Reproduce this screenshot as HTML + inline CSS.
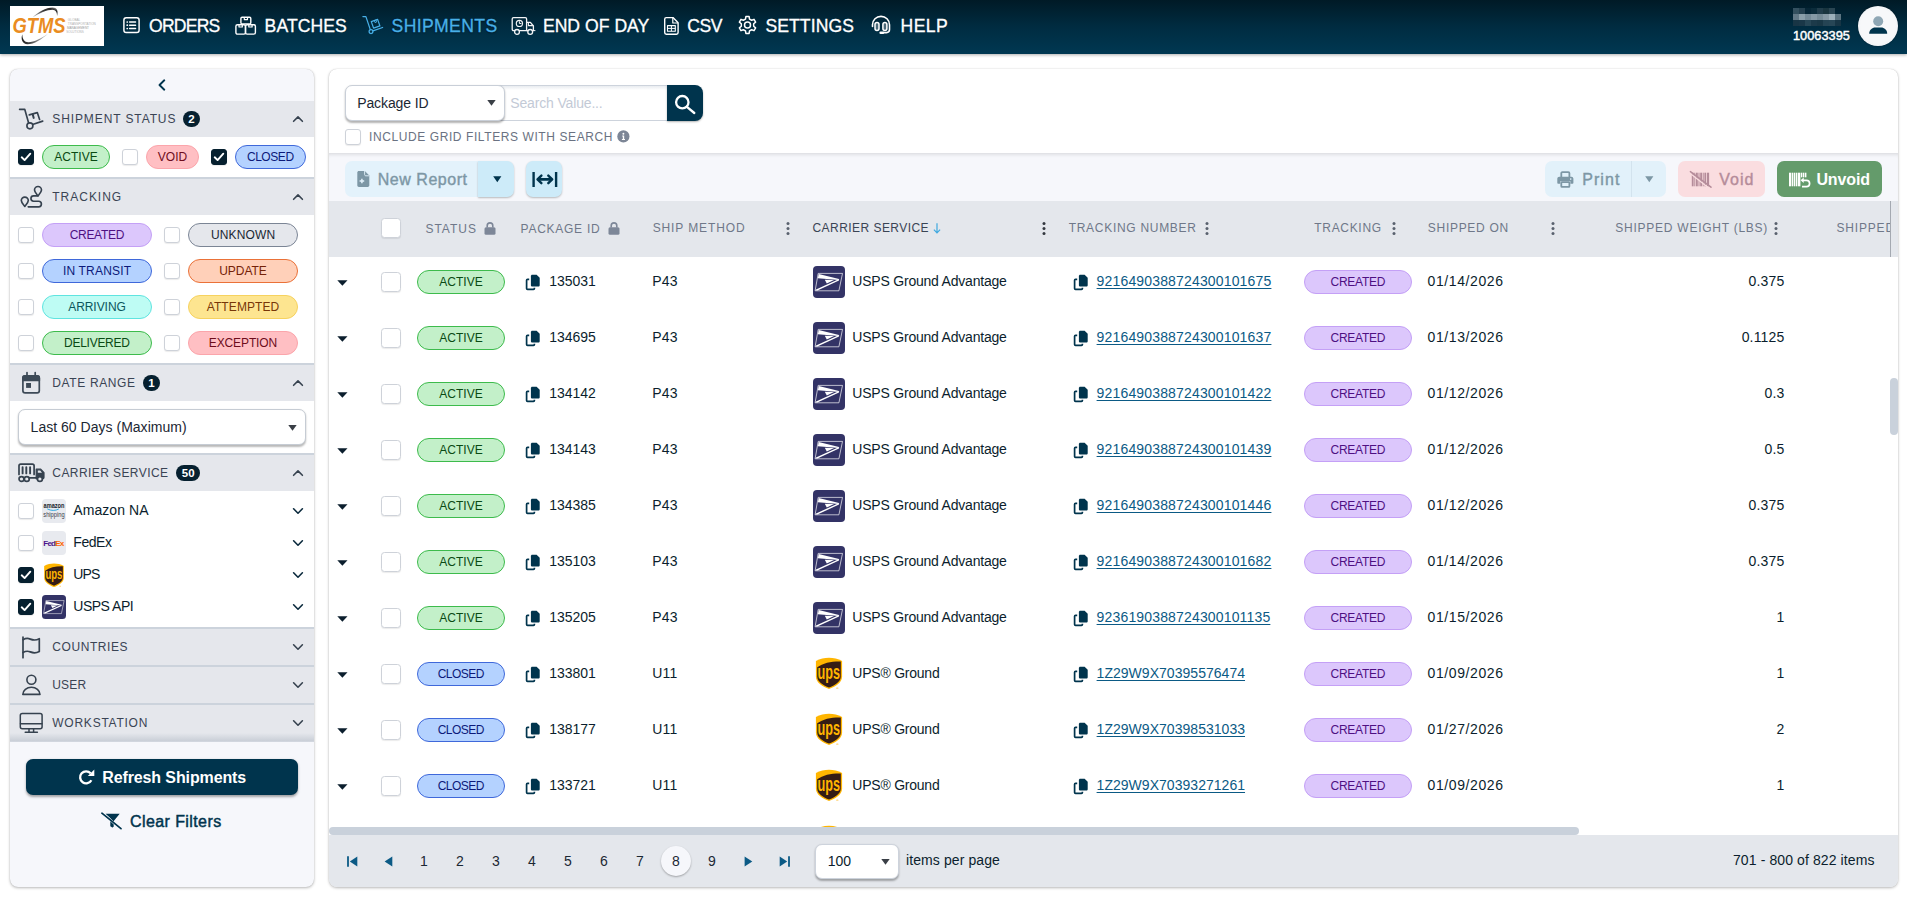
<!DOCTYPE html>
<html lang="en">
<head>
<meta charset="utf-8">
<title>GTMS Shipments</title>
<style>
*{box-sizing:border-box;margin:0;padding:0}
html,body{width:1907px;height:900px;overflow:hidden;background:#fff}
body{font-family:"Liberation Sans",sans-serif;font-size:14px;color:#0b1e2d;position:relative}
.abs{position:absolute}
svg{display:block;overflow:visible}
/* ---------- header ---------- */
#hdr{position:absolute;left:0;top:0;width:1907px;height:54px;background:linear-gradient(180deg,#001a26 0%,#002c41 50%,#003852 100%);box-shadow:0 1px 3px rgba(0,0,0,.32)}
#logo{position:absolute;left:10px;top:6px;width:94px;height:40px;background:#fff;overflow:hidden}
.nav{position:absolute;top:0;height:54px;color:#fff;font-size:17.6px;line-height:54px;white-space:nowrap}
.nav span{top:-1px;-webkit-text-stroke:.3px currentColor}
.nav.on{color:#48b0e8}
.nav svg{position:absolute}
/* ---------- sidebar ---------- */
#side{position:absolute;left:10px;top:69px;width:304px;height:818px;background:#f6f7fb;border-radius:8px;box-shadow:0 1px 3px rgba(0,0,0,.27),0 0 1px rgba(0,0,0,.2);overflow:hidden}
.sh{position:absolute;left:0;width:304px;height:36px;background:#e5e7ec}
.sh .t{position:absolute;left:42px;top:0;line-height:36px;font-size:12px;letter-spacing:1.2px;color:#3a4454;white-space:nowrap}
.sb{position:absolute;left:0;width:304px;background:#fff}
.sep{position:absolute;left:0;width:304px;height:2px;background:#ccd3dc}
.cb{position:absolute;width:16px;height:16px;border:1px solid #ced2d9;border-radius:3px;background:#fff;box-shadow:0 1px 1px rgba(0,0,0,.08)}
.cb.on{background:#06202f;border-color:#06202f}
.chip{position:absolute;height:24px;border-radius:12px;border:1px solid;font-size:12px;line-height:22px;text-align:center;letter-spacing:.35px;white-space:nowrap}
.c-active{background:#c3f0c9;border-color:#3dbb4c;color:#0a4a14}
.c-void{background:#ffbfc3;border-color:#fba5ab;color:#6e0d1c}
.c-closed{background:#b4d2ff;border-color:#3f68da;color:#0c1a7a}
.c-created{background:#dcc7fc;border-color:#c4a0f6;color:#4e1082}
.c-unknown{background:#e5e7ec;border-color:#7b8595;color:#1b2733}
.c-update{background:#ffd0b9;border-color:#ea7138;color:#742208}
.c-arriving{background:#befcf4;border-color:#5fe4e0;color:#0b565c}
.c-attempted{background:#fde590;border-color:#f6d25f;color:#783708}
.badge{position:absolute;height:16px;min-width:16px;border-radius:8px;background:#06202f;color:#fff;font-size:11.5px;font-weight:bold;line-height:16px;text-align:center}
/* ---------- main ---------- */
#main{position:absolute;left:329px;top:69px;width:1569px;height:818px;background:#fff;border-radius:8px;box-shadow:0 1px 3px rgba(0,0,0,.27),0 0 1px rgba(0,0,0,.2);overflow:hidden}
.tx{font-size:14px;line-height:21px;color:#0b1e2d;white-space:nowrap}
.lk{color:#0b5a85;text-decoration:underline;text-underline-offset:2px}
</style>
</head>
<body>
<svg width="0" height="0" style="position:absolute">
  <defs>
    <symbol id="upsLogo" viewBox="0 0 32 32">
      <path d="M2.900 4C7 1.900 11.500 .8 16 .8S25 1.900 29.100 4V19.500C29.100 26 22 29.500 16 32 10 29.500 2.900 26 2.900 19.500Z" fill="#ffb500"/>
      <path d="M4.200 10.300C10 5.800 18.500 4.200 27.800 4.400V19.400C27.800 25 21.500 28.200 16 30.400 10.500 28.200 4.200 25 4.200 19.400Z" fill="#351c15"/>
      <text x="4.600" y="21.700" font-family="Liberation Sans,sans-serif" font-weight="bold" font-size="20.500" fill="#ffb500" textLength="22.600" lengthAdjust="spacingAndGlyphs">ups</text>
      <circle cx="24.300" cy="31.300" r="1.150" fill="#ffdf9a"/>
    </symbol>
    <symbol id="uspsLogo" viewBox="0 0 32 32">
      <path d="M5.200 7.400H29.500L25.900 24.800H2.100Z" fill="none" stroke="#fff" stroke-width=".75" stroke-opacity=".9"/>
      <path d="M5.700 7.900L26 13 25.600 13.900 4.900 12.200Z" fill="#fff"/>
      <path d="M11.800 13.700L21 14 13.800 17.400Z" fill="#fff"/>
      <path d="M26.100 13.100L26 14.600 4.400 24.500 2.500 24.400 3 23.400Z" fill="#fff"/>
    </symbol>
    <symbol id="copyIc" viewBox="0 0 15 17">
      <path d="M7.200 .7H11.600L14.700 3.800V11.200C14.700 11.900 14.100 12.500 13.400 12.500H7.200C6.500 12.500 5.900 11.900 5.900 11.200V2C5.900 1.300 6.500 .7 7.200 .7Z" fill="#00344d"/>
      <path d="M4.200 5.300H2.500C2 5.300 1.600 5.700 1.600 6.200V14.400C1.600 14.900 2 15.300 2.500 15.300H8.500C9 15.300 9.400 14.900 9.400 14.400V13.800" fill="none" stroke="#00344d" stroke-width="1.700"/>
    </symbol>
  </defs>
</svg>
<div id="hdr">
  <div id="logo">
    <svg width="94" height="40" viewBox="0 0 94 40">
      <defs>
        <linearGradient id="sw1" x1="0" y1="1" x2="1" y2="0"><stop offset="0" stop-color="#c8c8c8"/><stop offset=".55" stop-color="#3a3a3a"/><stop offset=".8" stop-color="#2a2a2a"/><stop offset="1" stop-color="#b5b5b5"/></linearGradient>
        <linearGradient id="sw2" x1="0" y1="0" x2="1" y2="0"><stop offset="0" stop-color="#1e1e1e"/><stop offset=".35" stop-color="#4a4a4a"/><stop offset="1" stop-color="#d5d5d5"/></linearGradient>
      </defs>
      <path d="M22.500 11.500C28 6 36 1.500 42.600 1.400C46.800 1.400 48.700 4.600 47 10.200C47.300 6.200 45.500 3.900 42.500 3.800C37 3.800 29 7.200 22.500 11.500Z" fill="url(#sw1)"/>
      <path d="M12.400 28.300C10.400 33 12.500 38.300 17.500 38.300C24 38.100 32 33.200 38.200 27.400C32 32 24 36 18.500 36.300C14.500 36.400 12.200 33 12.400 28.300Z" fill="url(#sw2)"/>
      <text x="2.600" y="26.800" font-family="Liberation Sans,sans-serif" font-style="italic" font-weight="bold" font-size="22" fill="#ea8c22" textLength="53" lengthAdjust="spacingAndGlyphs">GTMS</text>
      <g font-family="Liberation Sans,sans-serif" font-size="2.900" fill="#b0b0b0">
        <text x="57.800" y="14.800" textLength="12.500" lengthAdjust="spacingAndGlyphs">GLOBAL</text>
        <text x="57.800" y="18.900" textLength="28" lengthAdjust="spacingAndGlyphs">TRANSPORTATION</text>
        <text x="57" y="23.100" textLength="22" lengthAdjust="spacingAndGlyphs" fill="#9a9a9a">MANAGEMENT</text>
        <text x="56.300" y="27.300" textLength="17.500" lengthAdjust="spacingAndGlyphs">SOLUTIONS</text>
      </g>
    </svg>
  </div>

  <!-- ORDERS -->
  <div class="nav" style="left:123px;width:100px">
    <svg style="left:0;top:16px" width="18" height="18" viewBox="0 0 18 18" fill="none" stroke="#fff" stroke-width="1.45" stroke-linecap="round">
      <rect x=".9" y="1.7" width="15.2" height="14.8" rx="2.3"/>
      <path d="M6.6 6H12.6M6.6 9.2H12.6M6.6 12.5H12.6" stroke-width="1.35"/>
      <path d="M4.2 6h.1M4.2 9.2h.1M4.2 12.5h.1" stroke-width="1.7"/>
    </svg>
    <span class="abs" style="left:26px;letter-spacing:-.8px">ORDERS</span>
  </div>

  <!-- BATCHES -->
  <div class="nav" style="left:235px;width:115px">
    <svg style="left:0;top:15.6px" width="22" height="20" viewBox="0 0 22 20" fill="none" stroke="#fff" stroke-width="1.4" stroke-linejoin="round">
      <rect x="5.9" y="1.3" width="9.9" height="6.6" rx="1.2"/>
      <path d="M9.3 1.5v2.1h3.2V1.5" stroke-width="1.2"/>
      <rect x=".9" y="8.7" width="9.6" height="9.4" rx="1.6"/>
      <path d="M4 8.9v2.1h3.3V8.9" stroke-width="1.2"/>
      <rect x="10.5" y="8.7" width="9.9" height="9.4" rx="1.6"/>
      <path d="M13.8 8.9v2.1h3.3V8.9" stroke-width="1.2"/>
    </svg>
    <span class="abs" style="left:29.6px;letter-spacing:.07px">BATCHES</span>
  </div>

  <!-- SHIPMENTS -->
  <div class="nav on" style="left:362px;width:140px;text-shadow:0 1px 2px rgba(0,0,0,.55)">
    <svg style="left:0;top:15px" width="22" height="20" viewBox="0 0 22 20" fill="none" stroke="#48b0e8" stroke-width="1.25" stroke-linecap="round" stroke-linejoin="round">
      <path d="M.9 1.6H3.9L8.3 14.6"/>
      <circle cx="9" cy="16.6" r="1.9"/>
      <path d="M11 15.9L20.6 12.5"/>
      <path d="M9.3 6.6L15.6 4.4 17.9 10.9 11.6 13.1Z"/>
      <path d="M12.3 5.6l.7 2 1.6-.55-.7-2" stroke-width=".9"/>
    </svg>
    <span class="abs" style="left:29.6px;letter-spacing:.36px">SHIPMENTS</span>
  </div>

  <!-- END OF DAY -->
  <div class="nav" style="left:511px;width:145px">
    <svg style="left:0;top:15.6px" width="25" height="20" viewBox="0 0 25 20" fill="none" stroke="#f2f4f6" stroke-width="1.3" stroke-linejoin="round" stroke-linecap="round">
      <path d="M3.6 14.6H2.5C1.8 14.6 1.2 14 1.2 13.3V2.9C1.2 2.2 1.8 1.6 2.5 1.6H14.3C15 1.6 15.6 2.2 15.6 2.9V14.6H8.4"/>
      <path d="M15.6 6.4H19.4L22.4 10V14.6H21.4M15.6 14.6H17"/>
      <path d="M17.4 6.6V9.6H22" stroke-width="1.1"/>
      <circle cx="6" cy="15.9" r="2.4"/>
      <circle cx="19.2" cy="15.9" r="2.4"/>
      <circle cx="8.4" cy="7.4" r="3.1" stroke-width="1.15"/>
      <path d="M8.4 5.6V7.5H10" stroke-width="1"/>
      <path d="M22.4 14.6H24" stroke-width="1"/>
    </svg>
    <span class="abs" style="left:31.9px;letter-spacing:.02px">END OF DAY</span>
  </div>

  <!-- CSV -->
  <div class="nav" style="left:663px;width:70px">
    <svg style="left:0;top:15.6px" width="17" height="20" viewBox="0 0 17 20" fill="none" stroke="#fff" stroke-width="1.4" stroke-linejoin="round">
      <path d="M3.3 1.6H10L15.1 6.8V16.6C15.1 17.5 14.4 18.2 13.5 18.2H3.3C2.4 18.2 1.7 17.5 1.7 16.6V3.2C1.7 2.3 2.4 1.6 3.3 1.6Z"/>
      <path d="M9.8 1.8V7H15" stroke-width="1.2"/>
      <rect x="4.5" y="9.6" width="7.8" height="5.6" stroke-width="1.1"/>
      <path d="M4.5 12.4H12.3M8.4 9.6V15.2" stroke-width="1"/>
    </svg>
    <span class="abs" style="left:24.200px;letter-spacing:-.4px">CSV</span>
  </div>

  <!-- SETTINGS -->
  <div class="nav" style="left:738px;width:125px">
    <svg style="left:.2px;top:15.200px" width="19" height="20" viewBox="0 0 19 20" fill="none" stroke="#fff" stroke-width="1.500" stroke-linejoin="round">
      <path d="M7.49 4.03 L7.89 1.55 L11.11 1.55 L11.51 4.03 L13.67 5.27 L16.01 4.38 L17.62 7.17 L15.68 8.75 L15.68 11.25 L17.62 12.83 L16.01 15.62 L13.67 14.73 L11.51 15.97 L11.11 18.45 L7.89 18.45 L7.49 15.97 L5.33 14.73 L2.99 15.62 L1.38 12.83 L3.32 11.25 L3.32 8.75 L1.38 7.17 L2.99 4.38 L5.33 5.27Z"/>
      <circle cx="9.500" cy="10" r="3"/>
    </svg>
    <span class="abs" style="left:27.400px;letter-spacing:.08px">SETTINGS</span>
  </div>

  <!-- HELP -->
  <div class="nav" style="left:871px;width:90px">
    <svg style="left:0;top:15.400px" width="21" height="20" viewBox="0 0 21 20" fill="none" stroke="#fff" stroke-width="1.600" stroke-linecap="round" stroke-linejoin="round">
      <path d="M1.500 11.400V9.800C1.500 5 5.300 1.400 10 1.400S18.500 5 18.500 9.800V14.600C18.500 16.400 17.300 17.600 15.500 17.600H12.400"/>
      <rect x="4" y="7.400" width="4" height="8.200" rx="2" stroke-width="1.500" fill="rgba(255,255,255,.3)"/>
      <rect x="11.900" y="7.400" width="4" height="8.200" rx="2" stroke-width="1.500" fill="rgba(255,255,255,.3)"/>
      <path d="M9.600 17.700H12" stroke-width="2.400"/>
    </svg>
    <span class="abs" style="left:29.600px;letter-spacing:.4px">HELP</span>
  </div>

  <!-- user -->
  <svg class="abs" style="left:1793px;top:8px" width="48" height="18" viewBox="0 0 48 18" shape-rendering="crispEdges">
    <g>
      <rect x="0" y="0" width="6" height="6" fill="#33505f"/><rect x="6" y="0" width="6" height="6" fill="#24404f"/><rect x="12" y="0" width="6" height="6" fill="#062636"/><rect x="18" y="0" width="6" height="6" fill="#0b2c3b"/><rect x="24" y="0" width="6" height="6" fill="#213d4b"/><rect x="30" y="0" width="6" height="6" fill="#19353f"/><rect x="36" y="0" width="6" height="6" fill="#294552"/>
      <rect x="0" y="6" width="6" height="6" fill="#627987"/><rect x="6" y="6" width="6" height="6" fill="#8a9ea9"/><rect x="12" y="6" width="6" height="6" fill="#748a97"/><rect x="18" y="6" width="6" height="6" fill="#8599a5"/><rect x="24" y="6" width="6" height="6" fill="#758b97"/><rect x="30" y="6" width="6" height="6" fill="#8699a5"/><rect x="36" y="6" width="6" height="6" fill="#9db0ba"/><rect x="42" y="6" width="6" height="6" fill="#5c7481"/>
      <rect x="0" y="12" width="6" height="6" fill="#183545"/><rect x="6" y="12" width="6" height="6" fill="#1a3748"/><rect x="12" y="12" width="6" height="6" fill="#274656"/><rect x="18" y="12" width="6" height="6" fill="#1c3a4a"/><rect x="24" y="12" width="6" height="6" fill="#193746"/><rect x="30" y="12" width="6" height="6" fill="#254454"/><rect x="36" y="12" width="6" height="6" fill="#274656"/><rect x="42" y="12" width="6" height="6" fill="#173545"/>
    </g>
  </svg>
  <div class="abs" style="left:1793px;top:28px;font-size:12.800px;color:#fff;line-height:15px;letter-spacing:0;-webkit-text-stroke:.45px #fff">10063395</div>
  <div class="abs" style="left:1858px;top:6px;width:40px;height:40px;border-radius:50%;background:radial-gradient(circle at 50% 50%,#f7f8fa 60%,#e9ebef 100%);box-shadow:0 0 2px rgba(0,0,0,.4)">
    <svg width="40" height="40" viewBox="0 0 40 40">
      <circle cx="20.200" cy="15.200" r="5" fill="#8fa7b5"/>
      <path d="M11.200 27.700C11.200 24 14.300 21.600 17.200 21.600H23.200C26.100 21.600 29.200 24 29.200 27.700Z" fill="#00344d"/>
    </svg>
  </div>
</div>
<div id="side">
<svg class="abs" style="left:147px;top:9px" width="10" height="14" viewBox="0 0 10 14" fill="none" stroke="#00344d" stroke-width="1.9" stroke-linecap="round" stroke-linejoin="round"><path d="M7.300 2.300L2.500 7L7.300 11.700"/></svg>
<div class="sh" style="top:32px"><div class="t" style="left:42.3px;letter-spacing:0.89px">SHIPMENT STATUS</div></div>
<svg class="abs" style="left:8px;top:38px" width="27" height="24" viewBox="0 0 27 24" fill="none" stroke="#36424f" stroke-width="1.65" stroke-linecap="round" stroke-linejoin="round"><path d="M1.600 2.400H6.800L10.500 15.400"/><circle cx="11.900" cy="18.800" r="3"/><path d="M15.300 17.300L24.700 14.100"/><path d="M11.300 7.900L19.300 5.600L21.600 12.500"/><path d="M14.800 7.400L15.700 10.900" stroke-width="2"/></svg>
<div class="badge" style="left:173px;top:42px;width:17px">2</div>
<svg class="abs" style="left:282px;top:46px" width="12" height="8" viewBox="0 0 12 8" fill="none" stroke="#36424f" stroke-width="1.6" stroke-linecap="round" stroke-linejoin="round"><path d="M1.6 6.300L6 1.900L10.400 6.300"/></svg>
<div class="sh" style="top:110px"><div class="t" style="left:42.3px;letter-spacing:0.98px">TRACKING</div></div>
<svg class="abs" style="left:8px;top:116px" width="27" height="24" viewBox="0 0 27 24" fill="none" stroke="#36424f" stroke-width="1.65" stroke-linecap="round" stroke-linejoin="round"><path d="M6.800 21.400C5.300 19.600 3.300 17.700 3.300 15.600A3.500 3.500 0 0 1 10.300 15.600C10.300 17.700 8.300 19.600 6.800 21.400Z"/><path d="M20 10.800C18.500 9 16.500 7.100 16.500 5A3.500 3.500 0 0 1 23.500 5C23.500 7.100 21.500 9 20 10.800Z"/><path d="M20 10.900H15.600A2.650 2.650 0 0 0 15.600 16.200H20.600A2.800 2.800 0 0 1 20.600 21.800H10.200"/></svg>
<svg class="abs" style="left:282px;top:124px" width="12" height="8" viewBox="0 0 12 8" fill="none" stroke="#36424f" stroke-width="1.6" stroke-linecap="round" stroke-linejoin="round"><path d="M1.6 6.300L6 1.900L10.400 6.300"/></svg>
<div class="sh" style="top:296px"><div class="t" style="left:42.3px;letter-spacing:0.63px">DATE RANGE</div></div>
<svg class="abs" style="left:8px;top:302px" width="27" height="24" viewBox="0 0 27 24" fill="none" stroke="#3d4a57" stroke-width="1.7" stroke-linejoin="round"><rect x="4.900" y="4.900" width="16.400" height="17" rx="2.200"/><path d="M4.900 7.100C4.900 5.900 5.900 4.900 7.100 4.900H19.100C20.300 4.900 21.300 5.900 21.300 7.100V9.500H4.900Z" fill="#3d4a57"/><path d="M9 1.600V4.500M17.200 1.600V4.500" stroke-linecap="round"/><rect x="8.100" y="12" width="4.900" height="4.900" fill="#3d4a57" stroke="none"/></svg>
<div class="badge" style="left:133px;top:306px;width:17px">1</div>
<svg class="abs" style="left:282px;top:310px" width="12" height="8" viewBox="0 0 12 8" fill="none" stroke="#36424f" stroke-width="1.6" stroke-linecap="round" stroke-linejoin="round"><path d="M1.6 6.300L6 1.900L10.400 6.300"/></svg>
<div class="sh" style="top:386px"><div class="t" style="left:42.3px;letter-spacing:0.42px">CARRIER SERVICE</div></div>
<svg class="abs" style="left:6px;top:392px" width="30" height="24" viewBox="0 0 30 24" fill="none" stroke="#36424f" stroke-width="1.7" stroke-linecap="round" stroke-linejoin="round"><path d="M3 13.500V4.800C3 3.800 3.700 3.100 4.700 3.100H16.400C17.400 3.100 18.100 3.800 18.100 4.800V13.500"/><path d="M6.600 6.300V12.400M10.300 6.300V12.400M14.100 6.300V12.400" stroke-width="1.900"/><circle cx="5.500" cy="18" r="2.450"/><circle cx="10.800" cy="18" r="2.450"/><path d="M13.400 16.900H21.500" stroke-width="1.800"/><path d="M20.200 8.200H24.700L28 11.600V16.600C28 17.300 27.500 17.800 26.800 17.800H20.200Z" fill="#36424f" stroke-width="1.200"/><path d="M21.800 9.600H24.200L26 11.700H21.800Z" fill="#e5e7ec" stroke="none"/><circle cx="23.900" cy="18" r="2.450" fill="#e5e7ec"/></svg>
<div class="badge" style="left:166.3px;top:396px;width:23.7px">50</div>
<svg class="abs" style="left:282px;top:400px" width="12" height="8" viewBox="0 0 12 8" fill="none" stroke="#36424f" stroke-width="1.6" stroke-linecap="round" stroke-linejoin="round"><path d="M1.6 6.300L6 1.900L10.400 6.300"/></svg>
<div class="sh" style="top:560px"><div class="t" style="left:42.3px;letter-spacing:0.57px">COUNTRIES</div></div>
<svg class="abs" style="left:8px;top:566px" width="27" height="24" viewBox="0 0 27 24" fill="none" stroke="#36424f" stroke-width="1.7" stroke-linecap="round" stroke-linejoin="round"><path d="M5 2V22.700"/><path d="M5 4.700C7.500 3.300 10 3.100 12.300 4.100S17.800 5.600 21.300 3.700V16.500C17.800 18.400 14.600 17.900 12.300 16.900S7.500 16.100 5 17.500"/></svg>
<svg class="abs" style="left:282px;top:574px" width="12" height="8" viewBox="0 0 12 8" fill="none" stroke="#36424f" stroke-width="1.6" stroke-linecap="round" stroke-linejoin="round"><path d="M1.6 1.800L6 6.200L10.400 1.800"/></svg>
<div class="sh" style="top:598px"><div class="t" style="left:42.3px;letter-spacing:0.15px">USER</div></div>
<svg class="abs" style="left:8px;top:604px" width="27" height="24" viewBox="0 0 27 24" fill="none" stroke="#36424f" stroke-width="1.6" stroke-linejoin="round"><circle cx="13.400" cy="6.800" r="4.500"/><path d="M4.800 21.400C4.800 17.300 8.800 14.200 13.400 14.200S22 17.300 22 21.400Z"/></svg>
<svg class="abs" style="left:282px;top:612px" width="12" height="8" viewBox="0 0 12 8" fill="none" stroke="#36424f" stroke-width="1.6" stroke-linecap="round" stroke-linejoin="round"><path d="M1.6 1.800L6 6.200L10.400 1.800"/></svg>
<div class="sh" style="top:636px"><div class="t" style="left:42.3px;letter-spacing:0.75px">WORKSTATION</div></div>
<svg class="abs" style="left:8px;top:642px" width="27" height="24" viewBox="0 0 27 24" fill="none" stroke="#36424f" stroke-width="1.500" stroke-linecap="round" stroke-linejoin="round"><rect x="2.300" y="2.500" width="21.800" height="15.300" rx="2"/><path d="M2.500 12.800H23.900M11 18V21M15.600 18V21M7.200 21.300H19.400"/></svg>
<svg class="abs" style="left:282px;top:650px" width="12" height="8" viewBox="0 0 12 8" fill="none" stroke="#36424f" stroke-width="1.6" stroke-linecap="round" stroke-linejoin="round"><path d="M1.6 1.800L6 6.200L10.400 1.800"/></svg>
<div class="sep" style="top:108px"></div>
<div class="sep" style="top:294px"></div>
<div class="sep" style="top:384px"></div>
<div class="sep" style="top:558px"></div>
<div class="sep" style="top:596px"></div>
<div class="sep" style="top:634px"></div>
<div class="sb" style="top:68px;height:40px"></div>
<div class="sb" style="top:146px;height:148px"></div>
<div class="sb" style="top:332px;height:52px"></div>
<div class="sb" style="top:422px;height:136px"></div>
<div class="cb on" style="left:8px;top:80px"><svg width="14" height="14" viewBox="0 0 14 14" fill="none" stroke="#fff" stroke-width="1.9" stroke-linecap="round" stroke-linejoin="round"><path d="M2.700 7.300L5.600 10.100L11.300 3.700"/></svg></div>
<div class="chip c-active" style="left:32px;top:76px;width:68px;letter-spacing:0.03px;text-indent:0.03px">ACTIVE</div>
<div class="cb" style="left:112px;top:80px"></div>
<div class="chip c-void" style="left:136px;top:76px;width:53px;letter-spacing:-0.01px;text-indent:-0.01px">VOID</div>
<div class="cb on" style="left:201px;top:80px"><svg width="14" height="14" viewBox="0 0 14 14" fill="none" stroke="#fff" stroke-width="1.9" stroke-linecap="round" stroke-linejoin="round"><path d="M2.700 7.300L5.600 10.100L11.300 3.700"/></svg></div>
<div class="chip c-closed" style="left:225px;top:76px;width:71px;letter-spacing:-0.43px;text-indent:-0.43px">CLOSED</div>
<div class="cb" style="left:8px;top:158px"></div>
<div class="chip c-created" style="left:32px;top:154px;width:110px;letter-spacing:-0.29px;text-indent:-0.29px">CREATED</div>
<div class="cb" style="left:154px;top:158px"></div>
<div class="chip c-unknown" style="left:178px;top:154px;width:110px;letter-spacing:0.15px;text-indent:0.15px">UNKNOWN</div>
<div class="cb" style="left:8px;top:194px"></div>
<div class="chip c-closed" style="left:32px;top:190px;width:110px;letter-spacing:0.19px;text-indent:0.19px">IN TRANSIT</div>
<div class="cb" style="left:154px;top:194px"></div>
<div class="chip c-update" style="left:178px;top:190px;width:110px;letter-spacing:-0.04px;text-indent:-0.04px">UPDATE</div>
<div class="cb" style="left:8px;top:230px"></div>
<div class="chip c-arriving" style="left:32px;top:226px;width:110px;letter-spacing:-0.05px;text-indent:-0.05px">ARRIVING</div>
<div class="cb" style="left:154px;top:230px"></div>
<div class="chip c-attempted" style="left:178px;top:226px;width:110px;letter-spacing:0.1px;text-indent:0.1px">ATTEMPTED</div>
<div class="cb" style="left:8px;top:266px"></div>
<div class="chip c-active" style="left:32px;top:262px;width:110px;letter-spacing:-0.28px;text-indent:-0.28px">DELIVERED</div>
<div class="cb" style="left:154px;top:266px"></div>
<div class="chip c-void" style="left:178px;top:262px;width:110px;letter-spacing:-0.12px;text-indent:-0.12px">EXCEPTION</div>
<div class="abs" style="left:8px;top:340px;width:288px;height:36px;border:1px solid #c6ccd4;border-radius:7px;background:#fff;box-shadow:0 1.500px 2px rgba(0,0,0,.28)"><div class="abs" style="left:11.600px;top:0;line-height:34px;font-size:14px;letter-spacing:.02px;color:#1b2733">Last 60 Days (Maximum)</div><svg class="abs" style="left:269px;top:14.500px" width="9" height="6" viewBox="0 0 9 6"><path d="M.3 0H8.700L4.500 5.800Z" fill="#3a3f46"/></svg></div>
<div class="cb" style="left:8px;top:434px"></div>
<div class="abs" style="left:32px;top:430px;width:24px;height:24px;border-radius:4px;background:#e8eaef;overflow:hidden"><svg width="24" height="24" viewBox="0 0 24 24"><text x="12" y="8.700" text-anchor="middle" font-family="Liberation Sans,sans-serif" font-weight="bold" font-size="6.400" fill="#20252b" textLength="21" lengthAdjust="spacingAndGlyphs">amazon</text><path d="M5.300 9.900C9 11.900 13.500 11.900 16.800 10" fill="none" stroke="#31a8e0" stroke-width="1"/><text x="12" y="17.900" text-anchor="middle" font-family="Liberation Sans,sans-serif" font-size="6.300" fill="#3c4249" textLength="21.500" lengthAdjust="spacingAndGlyphs">shipping</text></svg></div>
<div class="abs" style="left:63.3px;top:429px;line-height:24px;font-size:14px;letter-spacing:0.06px;color:#0b1e2d;white-space:nowrap">Amazon NA</div>
<svg class="abs" style="left:282px;top:438px" width="12" height="8" viewBox="0 0 12 8" fill="none" stroke="#0b2a3d" stroke-width="1.6" stroke-linecap="round" stroke-linejoin="round"><path d="M1.6 1.800L6 6.200L10.400 1.800"/></svg>
<div class="cb" style="left:8px;top:466px"></div>
<div class="abs" style="left:32px;top:462px;width:24px;height:24px;border-radius:4px;background:#e8eaef;overflow:hidden"><svg width="24" height="24" viewBox="0 0 24 24"><text x="1.300" y="14.500" font-family="Liberation Sans,sans-serif" font-weight="bold" font-size="8" letter-spacing="-.78" fill="#4d148c">Fed<tspan fill="#ff6600">Ex</tspan></text><circle cx="21.600" cy="14" r=".4" fill="#ff6600"/></svg></div>
<div class="abs" style="left:63.3px;top:461px;line-height:24px;font-size:14px;letter-spacing:-0.47px;color:#0b1e2d;white-space:nowrap">FedEx</div>
<svg class="abs" style="left:282px;top:470px" width="12" height="8" viewBox="0 0 12 8" fill="none" stroke="#0b2a3d" stroke-width="1.6" stroke-linecap="round" stroke-linejoin="round"><path d="M1.6 1.800L6 6.200L10.400 1.800"/></svg>
<div class="cb on" style="left:8px;top:498px"><svg width="14" height="14" viewBox="0 0 14 14" fill="none" stroke="#fff" stroke-width="1.9" stroke-linecap="round" stroke-linejoin="round"><path d="M2.700 7.300L5.600 10.100L11.300 3.700"/></svg></div>
<div class="abs" style="left:32px;top:494px;width:24px;height:24px"><svg width="24" height="24" viewBox="0 0 24 24"><use href="#upsLogo"/></svg></div>
<div class="abs" style="left:63.3px;top:493px;line-height:24px;font-size:14px;letter-spacing:-0.85px;color:#0b1e2d;white-space:nowrap">UPS</div>
<svg class="abs" style="left:282px;top:502px" width="12" height="8" viewBox="0 0 12 8" fill="none" stroke="#0b2a3d" stroke-width="1.6" stroke-linecap="round" stroke-linejoin="round"><path d="M1.6 1.800L6 6.200L10.400 1.800"/></svg>
<div class="cb on" style="left:8px;top:530px"><svg width="14" height="14" viewBox="0 0 14 14" fill="none" stroke="#fff" stroke-width="1.9" stroke-linecap="round" stroke-linejoin="round"><path d="M2.700 7.300L5.600 10.100L11.300 3.700"/></svg></div>
<div class="abs" style="left:32px;top:526px;width:24px;height:24px;border-radius:3.500px;background:#333366;overflow:hidden"><svg width="24" height="24" viewBox="0 0 32 32"><use href="#uspsLogo"/></svg></div>
<div class="abs" style="left:63.3px;top:525px;line-height:24px;font-size:14px;letter-spacing:-0.5px;color:#0b1e2d;white-space:nowrap">USPS API</div>
<svg class="abs" style="left:282px;top:534px" width="12" height="8" viewBox="0 0 12 8" fill="none" stroke="#0b2a3d" stroke-width="1.6" stroke-linecap="round" stroke-linejoin="round"><path d="M1.6 1.800L6 6.200L10.400 1.800"/></svg>
<div class="abs" style="left:0;top:664px;width:304px;height:9px;background:linear-gradient(180deg,rgba(180,188,200,0) 0%,rgba(160,170,184,.45) 100%)"></div>
<div class="abs" style="left:16px;top:690px;width:272px;height:36px;border-radius:7px;background:#00344d;box-shadow:0 1.500px 2.500px rgba(0,0,0,.35)"><svg class="abs" style="left:51.500px;top:10.300px" width="17" height="16" viewBox="0 0 17 16" fill="none" stroke="#fff" stroke-width="2.300"><path d="M12.600 4.300A6 6 0 1 0 13.400 11.200"/><path d="M16.300 .5V7H9.800Z" fill="#fff" stroke="none"/></svg><div class="abs" style="left:76.200px;top:1px;line-height:35px;font-size:16px;font-weight:bold;color:#fff;letter-spacing:-0.11px;white-space:nowrap">Refresh Shipments</div></div>
<svg class="abs" style="left:91px;top:743px" width="22" height="18" viewBox="0 0 22 18"><path d="M4.600 1.700H18.700L13 8.700V9.800L8.500 5.300Z" fill="#00344d"/><path d="M9.300 9.200L12.700 12.600V14.300C12.700 15.200 11.700 15.800 10.900 15.300L9.300 14.200Z" fill="#00344d"/><path d="M.9 1.200L20 16.600" stroke="#00344d" stroke-width="1.700" stroke-linecap="round"/></svg>
<div class="abs" style="left:120px;top:741px;line-height:24px;font-size:16px;color:#00344d;letter-spacing:0.41px;-webkit-text-stroke:.45px #00344d;white-space:nowrap">Clear Filters</div>
</div>
<div id="main">
<div class="abs" style="left:169px;top:16px;width:170px;height:36px;border-top:1px solid #cdd3dc;border-bottom:1px solid #cdd3dc;background:linear-gradient(180deg,#e9ecf0 0,#fff 4px)"><div class="abs" style="left:12.300px;top:0;line-height:35px;font-size:14px;letter-spacing:-0.16px;color:#c3cad6;white-space:nowrap">Search Value...</div></div>
<div class="abs" style="left:16px;top:16px;width:159.500px;height:36px;border:1px solid #c9cfd8;border-radius:7px;background:#fff;box-shadow:0 1.500px 2px rgba(0,0,0,.3)"><div class="abs" style="left:11.200px;top:-.3px;line-height:35px;font-size:14px;letter-spacing:-0.10px;color:#1b2733;white-space:nowrap">Package ID</div><svg class="abs" style="left:140.800px;top:14.400px" width="9" height="6" viewBox="0 0 9 6"><path d="M.3 0H8.700L4.500 5.800Z" fill="#3a3f46"/></svg></div>
<div class="abs" style="left:338px;top:16px;width:36px;height:36px;background:#00344d;border-radius:0 8px 8px 0;box-shadow:0 1px 2px rgba(0,0,0,.3)"><svg width="36" height="36" viewBox="0 0 36 36" fill="none" stroke="#fff" stroke-width="2.300" stroke-linecap="round"><circle cx="15.300" cy="17.200" r="6.200"/><path d="M19.900 21.800L27.300 28"/></svg></div>
<div class="cb" style="left:16px;top:60px"></div>
<div class="abs" style="left:40px;top:60px;line-height:17px;font-size:12px;letter-spacing:0.59px;color:#6a7282;white-space:nowrap">INCLUDE GRID FILTERS WITH SEARCH</div>
<svg class="abs" style="left:288px;top:61px" width="13" height="13" viewBox="0 0 13 13"><circle cx="6.400" cy="6.400" r="6.100" fill="#7d8696"/><circle cx="6.400" cy="3.700" r=".95" fill="#fff"/><path d="M5.200 5.600H7.200V9H8V10H4.900V9H5.800V6.600H5.200Z" fill="#fff"/></svg>
<div class="abs" style="left:0;top:84px;width:1569px;height:48px;background:#f6f7fb;box-shadow:inset 0 4px 4px -3px rgba(0,0,0,.14)"></div>
<div class="abs" style="left:16px;top:92px;width:133px;height:36px;background:#e3f2fb;border-radius:7px 0 0 7px"><svg class="abs" style="left:12px;top:10px" width="13" height="16" viewBox="0 0 13 16"><path d="M1.900 0H7.800L12.300 4.500V14.300C12.300 15.200 11.600 15.900 10.700 15.900H1.900C1 15.900 .3 15.200 .3 14.300V1.600C.3 .7 1 0 1.900 0Z" fill="#7d97a5"/><path d="M7.600 0V3.700C7.600 4.300 8.100 4.800 8.700 4.800H12.300" fill="none" stroke="#e3f2fb" stroke-width=".9"/><path d="M4.900 7.700V12.300M2.600 10H7.200" stroke="#e3f2fb" stroke-width="1.500"/></svg><div class="abs" style="left:32.800px;top:1px;line-height:36px;font-size:16px;letter-spacing:0.52px;color:#7d97a5;-webkit-text-stroke:.4px #7d97a5;white-space:nowrap">New Report</div></div>
<div class="abs" style="left:149px;top:92px;width:36px;height:36px;background:#cdebf9;border-radius:0 7px 7px 0;box-shadow:0 1px 2px rgba(0,0,0,.25)"><svg class="abs" style="left:14.800px;top:15px" width="9" height="7" viewBox="0 0 9 7"><path d="M.2 .2H8.400L4.300 6.300Z" fill="#00344d"/></svg></div>
<div class="abs" style="left:197px;top:92px;width:36px;height:36px;background:#cdebf9;border-radius:7px;box-shadow:0 1px 2px rgba(0,0,0,.25)"><svg class="abs" style="left:5.500px;top:11px" width="26" height="16" viewBox="0 0 26 16" fill="none" stroke="#00344d"><path d="M1.600 0V15M24.100 0V15" stroke-width="2.400"/><path d="M5.800 7.400H19.900" stroke-width="2.800"/><path d="M9.400 3.600L5.500 7.400L9.400 11.200M16.300 3.600L20.200 7.400L16.300 11.200" stroke-width="2.400" stroke-linejoin="round" stroke-linecap="round"/></svg></div>
<div class="abs" style="left:1216px;top:92px;width:121px;height:36px;background:#e2f1fa;border-radius:7px"><div class="abs" style="left:85.500px;top:0;width:1px;height:36px;background:#d3e3ee"></div><svg class="abs" style="left:12px;top:9.500px" width="17" height="17" viewBox="0 0 17 17"><path d="M4.300 6V2.200C4.300 1.600 4.800 1.100 5.400 1.100H11.300C11.900 1.100 12.400 1.600 12.400 2.200V6" fill="none" stroke="#7d97a5" stroke-width="1.800"/><path d="M2.300 5.700H14.400C15.500 5.700 16.400 6.600 16.400 7.700V11.700C16.400 12.300 15.900 12.700 15.400 12.700H13.400V10.200H3.300V12.700H1.300C.8 12.700 .3 12.300 .3 11.700V7.700C.3 6.600 1.200 5.700 2.300 5.700Z" fill="#7d97a5"/><rect x="4.300" y="11.200" width="8.100" height="4.700" rx=".6" fill="none" stroke="#7d97a5" stroke-width="1.800"/><circle cx="13.700" cy="8.100" r=".8" fill="#e2f1fa"/></svg><div class="abs" style="left:37.200px;top:1px;line-height:36px;font-size:16px;letter-spacing:1.07px;color:#7d97a5;-webkit-text-stroke:.4px #7d97a5;white-space:nowrap">Print</div><svg class="abs" style="left:100px;top:15px" width="9" height="7" viewBox="0 0 9 7"><path d="M.2 .2H8.400L4.300 6.300Z" fill="#7d97a5"/></svg></div>
<div class="abs" style="left:1349px;top:92px;width:87px;height:36px;background:#fadde0;border-radius:7px"><svg class="abs" style="left:12px;top:9.500px" width="22" height="17" viewBox="0 0 22 17"><g fill="#b58c9a"><rect x="1.800" y="1.700" width="1.800" height="13.600"/><rect x="4.300" y="1.700" width="1" height="13.600"/><rect x="6" y="1.700" width="1.800" height="13.600"/><rect x="8.500" y="1.700" width="1" height="13.600"/><rect x="10.200" y="1.700" width="1.800" height="13.600"/><rect x="12.700" y="1.700" width="1" height="13.600"/><rect x="14.400" y="1.700" width="1.800" height="13.600"/><rect x="17" y="1.700" width="2.100" height="13.600"/></g><path d="M-.6 1.700L19.300 17.400" stroke="#fadde0" stroke-width="1.300"/><path d="M.4 .6L21 16.200" stroke="#b58c9a" stroke-width="1.500" stroke-linecap="round"/></svg><div class="abs" style="left:41.300px;top:1px;line-height:36px;font-size:16px;letter-spacing:1.02px;color:#b58c9a;-webkit-text-stroke:.4px #b58c9a;white-space:nowrap">Void</div></div>
<div class="abs" style="left:1448px;top:92px;width:105px;height:36px;background:#649b6b;border-radius:7px"><svg class="abs" style="left:12px;top:9.500px" width="22" height="17" viewBox="0 0 22 17"><g fill="#fff"><rect x="0" y="1.700" width="2.400" height="13.600"/><rect x="3" y="1.700" width="1" height="13.600"/><rect x="4.600" y="1.700" width="1.800" height="13.600"/><rect x="7" y="1.700" width="1" height="13.600"/><rect x="8.600" y="1.700" width="2.800" height="13.600"/><rect x="12" y="1.700" width="1" height="4.600"/><rect x="13.600" y="1.700" width="1.800" height="4.600"/><rect x="16" y="1.700" width="1.400" height="4.600"/><path d="M11.600 9.300L14.700 6.600V12Z"/></g><path d="M13.500 9.300H17.400A3.200 3.200 0 0 1 17.400 15.700H13" fill="none" stroke="#fff" stroke-width="1.700"/></svg><div class="abs" style="left:39.400px;top:1px;line-height:36px;font-size:16px;font-weight:bold;letter-spacing:-0.12px;color:#fff;white-space:nowrap">Unvoid</div></div>
<div class="abs" style="left:0;top:132px;width:1569px;height:56px;background:#e4e7ec"></div>
<div class="abs" style="left:1561px;top:132px;width:1px;height:56px;background:#a4a9b1"></div>
<div class="cb" style="left:52px;top:149.2px;width:19.500px;height:19.500px;border-radius:3.500px"></div>
<div class="abs" style="left:96.4px;top:150.5px;line-height:18px;font-size:12px;letter-spacing:0.99px;color:#6f7889;white-space:nowrap">STATUS</div>
<div class="abs" style="left:191.6px;top:150.5px;line-height:18px;font-size:12px;letter-spacing:0.73px;color:#6f7889;white-space:nowrap">PACKAGE ID</div>
<div class="abs" style="left:323.7px;top:149.5px;line-height:18px;font-size:12px;letter-spacing:0.88px;color:#6f7889;white-space:nowrap">SHIP METHOD</div>
<div class="abs" style="left:483.5px;top:149.5px;line-height:18px;font-size:12px;letter-spacing:0.45px;color:#3a4454;white-space:nowrap">CARRIER SERVICE</div>
<div class="abs" style="left:739.7px;top:149.5px;line-height:18px;font-size:12px;letter-spacing:0.71px;color:#6f7889;white-space:nowrap">TRACKING NUMBER</div>
<div class="abs" style="left:985.3px;top:149.5px;line-height:18px;font-size:12px;letter-spacing:0.68px;color:#6f7889;white-space:nowrap">TRACKING</div>
<div class="abs" style="left:1098.8px;top:149.5px;line-height:18px;font-size:12px;letter-spacing:0.71px;color:#6f7889;white-space:nowrap">SHIPPED ON</div>
<div class="abs" style="left:1286.3px;top:149.5px;line-height:18px;font-size:12px;letter-spacing:0.75px;color:#6f7889;white-space:nowrap">SHIPPED WEIGHT (LBS)</div>
<div class="abs" style="left:1507.4px;top:149.5px;line-height:18px;font-size:12px;letter-spacing:0.84px;color:#6f7889;white-space:nowrap;width:53.600px;overflow:hidden">SHIPPED</div>
<svg class="abs" style="left:155px;top:153px" width="12" height="13" viewBox="0 0 12 13"><path d="M3.200 5.500V3.700A2.800 2.800 0 0 1 8.800 3.700V5.500" fill="none" stroke="#7d8798" stroke-width="1.600"/><rect x=".5" y="5.300" width="11" height="7.500" rx="1.500" fill="#7d8798"/></svg>
<svg class="abs" style="left:278.5px;top:153px" width="12" height="13" viewBox="0 0 12 13"><path d="M3.200 5.500V3.700A2.800 2.800 0 0 1 8.800 3.700V5.500" fill="none" stroke="#7d8798" stroke-width="1.600"/><rect x=".5" y="5.300" width="11" height="7.500" rx="1.500" fill="#7d8798"/></svg>
<svg class="abs" style="left:457.4px;top:152px" width="4" height="16" viewBox="0 0 4 16" fill="#59616e"><circle cx="2" cy="2.500" r="1.500"/><circle cx="2" cy="7.500" r="1.500"/><circle cx="2" cy="12.500" r="1.500"/></svg>
<svg class="abs" style="left:713.4px;top:152px" width="4" height="16" viewBox="0 0 4 16" fill="#33383f"><circle cx="2" cy="2.500" r="1.500"/><circle cx="2" cy="7.500" r="1.500"/><circle cx="2" cy="12.500" r="1.500"/></svg>
<svg class="abs" style="left:876.2px;top:152px" width="4" height="16" viewBox="0 0 4 16" fill="#59616e"><circle cx="2" cy="2.500" r="1.500"/><circle cx="2" cy="7.500" r="1.500"/><circle cx="2" cy="12.500" r="1.500"/></svg>
<svg class="abs" style="left:1062.6px;top:152px" width="4" height="16" viewBox="0 0 4 16" fill="#59616e"><circle cx="2" cy="2.500" r="1.500"/><circle cx="2" cy="7.500" r="1.500"/><circle cx="2" cy="12.500" r="1.500"/></svg>
<svg class="abs" style="left:1222.4px;top:152px" width="4" height="16" viewBox="0 0 4 16" fill="#59616e"><circle cx="2" cy="2.500" r="1.500"/><circle cx="2" cy="7.500" r="1.500"/><circle cx="2" cy="12.500" r="1.500"/></svg>
<svg class="abs" style="left:1444.6px;top:152px" width="4" height="16" viewBox="0 0 4 16" fill="#59616e"><circle cx="2" cy="2.500" r="1.500"/><circle cx="2" cy="7.500" r="1.500"/><circle cx="2" cy="12.500" r="1.500"/></svg>
<svg class="abs" style="left:603.7px;top:154.3px" width="8" height="11" viewBox="0 0 8 11" fill="none" stroke="#3fa9e0" stroke-width="1.200"><path d="M4 .3V9.600M.9 6.700L4 9.800L7.100 6.700"/></svg>
<div class="abs" id="rows" style="left:0;top:188px;width:1560px;height:570px;overflow:hidden">
<div class="row"><svg class="abs" style="left:7.8px;top:23.0px" width="11" height="6" viewBox="0 0 11 6"><path d="M.3 .2H10.500L5.400 5.800Z" fill="#0b1e2d"/></svg><div class="cb" style="left:52px;top:15.2px;width:19.500px;height:19.500px;border-radius:3.500px"></div><div class="chip c-active" style="left:88px;top:12.8px;width:88px;letter-spacing:0.03px;text-indent:0.03px">ACTIVE</div><svg class="abs" style="left:196.1px;top:16.5px" width="15" height="17" viewBox="0 0 15 17"><use href="#copyIc"/></svg><div class="abs tx" style="left:220.3px;top:14.3px;letter-spacing:-0.06px">135031</div><div class="abs tx" style="left:323.3px;top:14.3px;letter-spacing:0.19px">P43</div><div class="abs" style="left:484px;top:8.8px;width:32px;height:32px;border-radius:4px;background:#333366;overflow:hidden"><svg width="32" height="32" viewBox="0 0 32 32"><use href="#uspsLogo"/></svg></div><div class="abs tx" style="left:523.3px;top:14.3px;letter-spacing:-0.21px">USPS Ground Advantage</div><svg class="abs" style="left:744.1px;top:16.5px" width="15" height="17" viewBox="0 0 15 17"><use href="#copyIc"/></svg><div class="abs tx lk" style="left:767.6px;top:14.3px;letter-spacing:0.16px">9216490388724300101675</div><div class="chip c-created" style="left:975px;top:12.8px;width:108px;letter-spacing:-0.24px;text-indent:-0.24px">CREATED</div><div class="abs tx" style="left:1098.6px;top:14.3px;letter-spacing:0.59px">01/14/2026</div><div class="abs tx" style="left:1255.4px;top:14.3px;width:200px;text-align:right;letter-spacing:0.16px;margin-right:-0.16px">0.375</div></div>
<div class="row"><svg class="abs" style="left:7.8px;top:79.0px" width="11" height="6" viewBox="0 0 11 6"><path d="M.3 .2H10.500L5.400 5.800Z" fill="#0b1e2d"/></svg><div class="cb" style="left:52px;top:71.2px;width:19.500px;height:19.500px;border-radius:3.500px"></div><div class="chip c-active" style="left:88px;top:68.8px;width:88px;letter-spacing:0.03px;text-indent:0.03px">ACTIVE</div><svg class="abs" style="left:196.1px;top:72.5px" width="15" height="17" viewBox="0 0 15 17"><use href="#copyIc"/></svg><div class="abs tx" style="left:220.3px;top:70.3px;letter-spacing:-0.06px">134695</div><div class="abs tx" style="left:323.3px;top:70.3px;letter-spacing:0.19px">P43</div><div class="abs" style="left:484px;top:64.8px;width:32px;height:32px;border-radius:4px;background:#333366;overflow:hidden"><svg width="32" height="32" viewBox="0 0 32 32"><use href="#uspsLogo"/></svg></div><div class="abs tx" style="left:523.3px;top:70.3px;letter-spacing:-0.21px">USPS Ground Advantage</div><svg class="abs" style="left:744.1px;top:72.5px" width="15" height="17" viewBox="0 0 15 17"><use href="#copyIc"/></svg><div class="abs tx lk" style="left:767.6px;top:70.3px;letter-spacing:0.16px">9216490388724300101637</div><div class="chip c-created" style="left:975px;top:68.8px;width:108px;letter-spacing:-0.24px;text-indent:-0.24px">CREATED</div><div class="abs tx" style="left:1098.6px;top:70.3px;letter-spacing:0.59px">01/13/2026</div><div class="abs tx" style="left:1255.4px;top:70.3px;width:200px;text-align:right;letter-spacing:0.16px;margin-right:-0.16px">0.1125</div></div>
<div class="row"><svg class="abs" style="left:7.8px;top:135.0px" width="11" height="6" viewBox="0 0 11 6"><path d="M.3 .2H10.500L5.400 5.800Z" fill="#0b1e2d"/></svg><div class="cb" style="left:52px;top:127.2px;width:19.500px;height:19.500px;border-radius:3.500px"></div><div class="chip c-active" style="left:88px;top:124.8px;width:88px;letter-spacing:0.03px;text-indent:0.03px">ACTIVE</div><svg class="abs" style="left:196.1px;top:128.5px" width="15" height="17" viewBox="0 0 15 17"><use href="#copyIc"/></svg><div class="abs tx" style="left:220.3px;top:126.3px;letter-spacing:-0.06px">134142</div><div class="abs tx" style="left:323.3px;top:126.3px;letter-spacing:0.19px">P43</div><div class="abs" style="left:484px;top:120.8px;width:32px;height:32px;border-radius:4px;background:#333366;overflow:hidden"><svg width="32" height="32" viewBox="0 0 32 32"><use href="#uspsLogo"/></svg></div><div class="abs tx" style="left:523.3px;top:126.3px;letter-spacing:-0.21px">USPS Ground Advantage</div><svg class="abs" style="left:744.1px;top:128.5px" width="15" height="17" viewBox="0 0 15 17"><use href="#copyIc"/></svg><div class="abs tx lk" style="left:767.6px;top:126.3px;letter-spacing:0.16px">9216490388724300101422</div><div class="chip c-created" style="left:975px;top:124.8px;width:108px;letter-spacing:-0.24px;text-indent:-0.24px">CREATED</div><div class="abs tx" style="left:1098.6px;top:126.3px;letter-spacing:0.59px">01/12/2026</div><div class="abs tx" style="left:1255.4px;top:126.3px;width:200px;text-align:right;letter-spacing:0.16px;margin-right:-0.16px">0.3</div></div>
<div class="row"><svg class="abs" style="left:7.8px;top:191.0px" width="11" height="6" viewBox="0 0 11 6"><path d="M.3 .2H10.500L5.400 5.800Z" fill="#0b1e2d"/></svg><div class="cb" style="left:52px;top:183.2px;width:19.500px;height:19.500px;border-radius:3.500px"></div><div class="chip c-active" style="left:88px;top:180.8px;width:88px;letter-spacing:0.03px;text-indent:0.03px">ACTIVE</div><svg class="abs" style="left:196.1px;top:184.5px" width="15" height="17" viewBox="0 0 15 17"><use href="#copyIc"/></svg><div class="abs tx" style="left:220.3px;top:182.3px;letter-spacing:-0.06px">134143</div><div class="abs tx" style="left:323.3px;top:182.3px;letter-spacing:0.19px">P43</div><div class="abs" style="left:484px;top:176.8px;width:32px;height:32px;border-radius:4px;background:#333366;overflow:hidden"><svg width="32" height="32" viewBox="0 0 32 32"><use href="#uspsLogo"/></svg></div><div class="abs tx" style="left:523.3px;top:182.3px;letter-spacing:-0.21px">USPS Ground Advantage</div><svg class="abs" style="left:744.1px;top:184.5px" width="15" height="17" viewBox="0 0 15 17"><use href="#copyIc"/></svg><div class="abs tx lk" style="left:767.6px;top:182.3px;letter-spacing:0.16px">9216490388724300101439</div><div class="chip c-created" style="left:975px;top:180.8px;width:108px;letter-spacing:-0.24px;text-indent:-0.24px">CREATED</div><div class="abs tx" style="left:1098.6px;top:182.3px;letter-spacing:0.59px">01/12/2026</div><div class="abs tx" style="left:1255.4px;top:182.3px;width:200px;text-align:right;letter-spacing:0.16px;margin-right:-0.16px">0.5</div></div>
<div class="row"><svg class="abs" style="left:7.8px;top:247.0px" width="11" height="6" viewBox="0 0 11 6"><path d="M.3 .2H10.500L5.400 5.800Z" fill="#0b1e2d"/></svg><div class="cb" style="left:52px;top:239.2px;width:19.500px;height:19.500px;border-radius:3.500px"></div><div class="chip c-active" style="left:88px;top:236.8px;width:88px;letter-spacing:0.03px;text-indent:0.03px">ACTIVE</div><svg class="abs" style="left:196.1px;top:240.5px" width="15" height="17" viewBox="0 0 15 17"><use href="#copyIc"/></svg><div class="abs tx" style="left:220.3px;top:238.3px;letter-spacing:-0.06px">134385</div><div class="abs tx" style="left:323.3px;top:238.3px;letter-spacing:0.19px">P43</div><div class="abs" style="left:484px;top:232.8px;width:32px;height:32px;border-radius:4px;background:#333366;overflow:hidden"><svg width="32" height="32" viewBox="0 0 32 32"><use href="#uspsLogo"/></svg></div><div class="abs tx" style="left:523.3px;top:238.3px;letter-spacing:-0.21px">USPS Ground Advantage</div><svg class="abs" style="left:744.1px;top:240.5px" width="15" height="17" viewBox="0 0 15 17"><use href="#copyIc"/></svg><div class="abs tx lk" style="left:767.6px;top:238.3px;letter-spacing:0.16px">9216490388724300101446</div><div class="chip c-created" style="left:975px;top:236.8px;width:108px;letter-spacing:-0.24px;text-indent:-0.24px">CREATED</div><div class="abs tx" style="left:1098.6px;top:238.3px;letter-spacing:0.59px">01/12/2026</div><div class="abs tx" style="left:1255.4px;top:238.3px;width:200px;text-align:right;letter-spacing:0.16px;margin-right:-0.16px">0.375</div></div>
<div class="row"><svg class="abs" style="left:7.8px;top:303.0px" width="11" height="6" viewBox="0 0 11 6"><path d="M.3 .2H10.500L5.400 5.800Z" fill="#0b1e2d"/></svg><div class="cb" style="left:52px;top:295.2px;width:19.500px;height:19.500px;border-radius:3.500px"></div><div class="chip c-active" style="left:88px;top:292.8px;width:88px;letter-spacing:0.03px;text-indent:0.03px">ACTIVE</div><svg class="abs" style="left:196.1px;top:296.5px" width="15" height="17" viewBox="0 0 15 17"><use href="#copyIc"/></svg><div class="abs tx" style="left:220.3px;top:294.3px;letter-spacing:-0.06px">135103</div><div class="abs tx" style="left:323.3px;top:294.3px;letter-spacing:0.19px">P43</div><div class="abs" style="left:484px;top:288.8px;width:32px;height:32px;border-radius:4px;background:#333366;overflow:hidden"><svg width="32" height="32" viewBox="0 0 32 32"><use href="#uspsLogo"/></svg></div><div class="abs tx" style="left:523.3px;top:294.3px;letter-spacing:-0.21px">USPS Ground Advantage</div><svg class="abs" style="left:744.1px;top:296.5px" width="15" height="17" viewBox="0 0 15 17"><use href="#copyIc"/></svg><div class="abs tx lk" style="left:767.6px;top:294.3px;letter-spacing:0.16px">9216490388724300101682</div><div class="chip c-created" style="left:975px;top:292.8px;width:108px;letter-spacing:-0.24px;text-indent:-0.24px">CREATED</div><div class="abs tx" style="left:1098.6px;top:294.3px;letter-spacing:0.59px">01/14/2026</div><div class="abs tx" style="left:1255.4px;top:294.3px;width:200px;text-align:right;letter-spacing:0.16px;margin-right:-0.16px">0.375</div></div>
<div class="row"><svg class="abs" style="left:7.8px;top:359.0px" width="11" height="6" viewBox="0 0 11 6"><path d="M.3 .2H10.500L5.400 5.800Z" fill="#0b1e2d"/></svg><div class="cb" style="left:52px;top:351.2px;width:19.500px;height:19.500px;border-radius:3.500px"></div><div class="chip c-active" style="left:88px;top:348.8px;width:88px;letter-spacing:0.03px;text-indent:0.03px">ACTIVE</div><svg class="abs" style="left:196.1px;top:352.5px" width="15" height="17" viewBox="0 0 15 17"><use href="#copyIc"/></svg><div class="abs tx" style="left:220.3px;top:350.3px;letter-spacing:-0.06px">135205</div><div class="abs tx" style="left:323.3px;top:350.3px;letter-spacing:0.19px">P43</div><div class="abs" style="left:484px;top:344.8px;width:32px;height:32px;border-radius:4px;background:#333366;overflow:hidden"><svg width="32" height="32" viewBox="0 0 32 32"><use href="#uspsLogo"/></svg></div><div class="abs tx" style="left:523.3px;top:350.3px;letter-spacing:-0.21px">USPS Ground Advantage</div><svg class="abs" style="left:744.1px;top:352.5px" width="15" height="17" viewBox="0 0 15 17"><use href="#copyIc"/></svg><div class="abs tx lk" style="left:767.6px;top:350.3px;letter-spacing:0.16px">9236190388724300101135</div><div class="chip c-created" style="left:975px;top:348.8px;width:108px;letter-spacing:-0.24px;text-indent:-0.24px">CREATED</div><div class="abs tx" style="left:1098.6px;top:350.3px;letter-spacing:0.59px">01/15/2026</div><div class="abs tx" style="left:1255.4px;top:350.3px;width:200px;text-align:right;letter-spacing:0.16px;margin-right:-0.16px">1</div></div>
<div class="row"><svg class="abs" style="left:7.8px;top:415.0px" width="11" height="6" viewBox="0 0 11 6"><path d="M.3 .2H10.500L5.400 5.800Z" fill="#0b1e2d"/></svg><div class="cb" style="left:52px;top:407.2px;width:19.500px;height:19.500px;border-radius:3.500px"></div><div class="chip c-closed" style="left:88px;top:404.8px;width:88px;letter-spacing:-0.53px;text-indent:-0.53px">CLOSED</div><svg class="abs" style="left:196.1px;top:408.5px" width="15" height="17" viewBox="0 0 15 17"><use href="#copyIc"/></svg><div class="abs tx" style="left:220.3px;top:406.3px;letter-spacing:-0.06px">133801</div><div class="abs tx" style="left:323.3px;top:406.3px;letter-spacing:0.19px">U11</div><svg class="abs" style="left:484px;top:400.3px" width="32" height="32" viewBox="0 0 32 32"><use href="#upsLogo"/></svg><div class="abs tx" style="left:523.3px;top:406.3px;letter-spacing:-0.23px">UPS® Ground</div><svg class="abs" style="left:744.1px;top:408.5px" width="15" height="17" viewBox="0 0 15 17"><use href="#copyIc"/></svg><div class="abs tx lk" style="left:767.6px;top:406.3px;letter-spacing:0.03px">1Z29W9X70395576474</div><div class="chip c-created" style="left:975px;top:404.8px;width:108px;letter-spacing:-0.24px;text-indent:-0.24px">CREATED</div><div class="abs tx" style="left:1098.6px;top:406.3px;letter-spacing:0.59px">01/09/2026</div><div class="abs tx" style="left:1255.4px;top:406.3px;width:200px;text-align:right;letter-spacing:0.16px;margin-right:-0.16px">1</div></div>
<div class="row"><svg class="abs" style="left:7.8px;top:471.0px" width="11" height="6" viewBox="0 0 11 6"><path d="M.3 .2H10.500L5.400 5.800Z" fill="#0b1e2d"/></svg><div class="cb" style="left:52px;top:463.2px;width:19.500px;height:19.500px;border-radius:3.500px"></div><div class="chip c-closed" style="left:88px;top:460.8px;width:88px;letter-spacing:-0.53px;text-indent:-0.53px">CLOSED</div><svg class="abs" style="left:196.1px;top:464.5px" width="15" height="17" viewBox="0 0 15 17"><use href="#copyIc"/></svg><div class="abs tx" style="left:220.3px;top:462.3px;letter-spacing:-0.06px">138177</div><div class="abs tx" style="left:323.3px;top:462.3px;letter-spacing:0.19px">U11</div><svg class="abs" style="left:484px;top:456.3px" width="32" height="32" viewBox="0 0 32 32"><use href="#upsLogo"/></svg><div class="abs tx" style="left:523.3px;top:462.3px;letter-spacing:-0.23px">UPS® Ground</div><svg class="abs" style="left:744.1px;top:464.5px" width="15" height="17" viewBox="0 0 15 17"><use href="#copyIc"/></svg><div class="abs tx lk" style="left:767.6px;top:462.3px;letter-spacing:0.03px">1Z29W9X70398531033</div><div class="chip c-created" style="left:975px;top:460.8px;width:108px;letter-spacing:-0.24px;text-indent:-0.24px">CREATED</div><div class="abs tx" style="left:1098.6px;top:462.3px;letter-spacing:0.59px">01/27/2026</div><div class="abs tx" style="left:1255.4px;top:462.3px;width:200px;text-align:right;letter-spacing:0.16px;margin-right:-0.16px">2</div></div>
<div class="row"><svg class="abs" style="left:7.8px;top:527.0px" width="11" height="6" viewBox="0 0 11 6"><path d="M.3 .2H10.500L5.400 5.800Z" fill="#0b1e2d"/></svg><div class="cb" style="left:52px;top:519.2px;width:19.500px;height:19.500px;border-radius:3.500px"></div><div class="chip c-closed" style="left:88px;top:516.8px;width:88px;letter-spacing:-0.53px;text-indent:-0.53px">CLOSED</div><svg class="abs" style="left:196.1px;top:520.5px" width="15" height="17" viewBox="0 0 15 17"><use href="#copyIc"/></svg><div class="abs tx" style="left:220.3px;top:518.3px;letter-spacing:-0.06px">133721</div><div class="abs tx" style="left:323.3px;top:518.3px;letter-spacing:0.19px">U11</div><svg class="abs" style="left:484px;top:512.3px" width="32" height="32" viewBox="0 0 32 32"><use href="#upsLogo"/></svg><div class="abs tx" style="left:523.3px;top:518.3px;letter-spacing:-0.23px">UPS® Ground</div><svg class="abs" style="left:744.1px;top:520.5px" width="15" height="17" viewBox="0 0 15 17"><use href="#copyIc"/></svg><div class="abs tx lk" style="left:767.6px;top:518.3px;letter-spacing:0.03px">1Z29W9X70393271261</div><div class="chip c-created" style="left:975px;top:516.8px;width:108px;letter-spacing:-0.24px;text-indent:-0.24px">CREATED</div><div class="abs tx" style="left:1098.6px;top:518.3px;letter-spacing:0.59px">01/09/2026</div><div class="abs tx" style="left:1255.4px;top:518.3px;width:200px;text-align:right;letter-spacing:0.16px;margin-right:-0.16px">1</div></div>
<div class="row"><svg class="abs" style="left:484px;top:568.3px" width="32" height="32" viewBox="0 0 32 32"><use href="#upsLogo"/></svg></div>
</div>
<div class="abs" style="left:0;top:758px;width:1250px;height:8px;background:#c9d1db;border-radius:4px 4px 4px 4px"></div>
<div class="abs" style="left:1560.5px;top:309px;width:8px;height:57px;background:#c9d1db;border-radius:4px"></div>
<div class="abs" style="left:0;top:766px;width:1569px;height:52px;background:#e4e7ec"></div>
<svg class="abs" style="left:17.5px;top:786.5px" width="11" height="11" viewBox="0 0 11 11"><path d="M1 .3V10.700" stroke="#0b5a85" stroke-width="1.800"/><path d="M10.300 .4V10.600L2.800 5.500Z" fill="#0b5a85"/></svg>
<svg class="abs" style="left:55px;top:786.5px" width="9" height="11" viewBox="0 0 9 11"><path d="M8.300 .4V10.600L.6 5.500Z" fill="#0b5a85"/></svg>
<svg class="abs" style="left:414.5px;top:786.5px" width="9" height="11" viewBox="0 0 9 11"><path d="M.6 .4V10.600L8.300 5.500Z" fill="#0b5a85"/></svg>
<svg class="abs" style="left:449.5px;top:786.5px" width="11" height="11" viewBox="0 0 11 11"><path d="M10 .3V10.700" stroke="#0b5a85" stroke-width="1.800"/><path d="M.7 .4V10.600L8.200 5.500Z" fill="#0b5a85"/></svg>
<div class="abs" style="left:332px;top:777px;width:30px;height:30px;border-radius:50%;background:#f6f7fb;box-shadow:0 1px 2px rgba(0,0,0,.3)"></div>
<div class="abs tx" style="left:85px;top:781.9px;width:20px;text-align:center;color:#1b2733">1</div>
<div class="abs tx" style="left:121px;top:781.9px;width:20px;text-align:center;color:#1b2733">2</div>
<div class="abs tx" style="left:157px;top:781.9px;width:20px;text-align:center;color:#1b2733">3</div>
<div class="abs tx" style="left:193px;top:781.9px;width:20px;text-align:center;color:#1b2733">4</div>
<div class="abs tx" style="left:229px;top:781.9px;width:20px;text-align:center;color:#1b2733">5</div>
<div class="abs tx" style="left:265px;top:781.9px;width:20px;text-align:center;color:#1b2733">6</div>
<div class="abs tx" style="left:301px;top:781.9px;width:20px;text-align:center;color:#1b2733">7</div>
<div class="abs tx" style="left:337px;top:781.9px;width:20px;text-align:center;color:#1b2733">8</div>
<div class="abs tx" style="left:373px;top:781.9px;width:20px;text-align:center;color:#1b2733">9</div>
<div class="abs" style="left:486px;top:774.5px;width:83.500px;height:35.500px;border:1px solid #cdd3dc;border-radius:7px;background:#fff;box-shadow:0 1.500px 2px rgba(0,0,0,.3)"><div class="abs tx" style="left:11.800px;top:6.500px">100</div><svg class="abs" style="left:65px;top:14px" width="9" height="6" viewBox="0 0 9 6"><path d="M.3 0H8.700L4.500 5.800Z" fill="#3a3f46"/></svg></div>
<div class="abs tx" style="left:577px;top:781px;letter-spacing:0.1px">items per page</div>
<div class="abs tx" style="left:1245.5px;top:781px;width:300px;text-align:right;letter-spacing:0.1px">701 - 800 of 822 items</div>
</div>
</body>
</html>
